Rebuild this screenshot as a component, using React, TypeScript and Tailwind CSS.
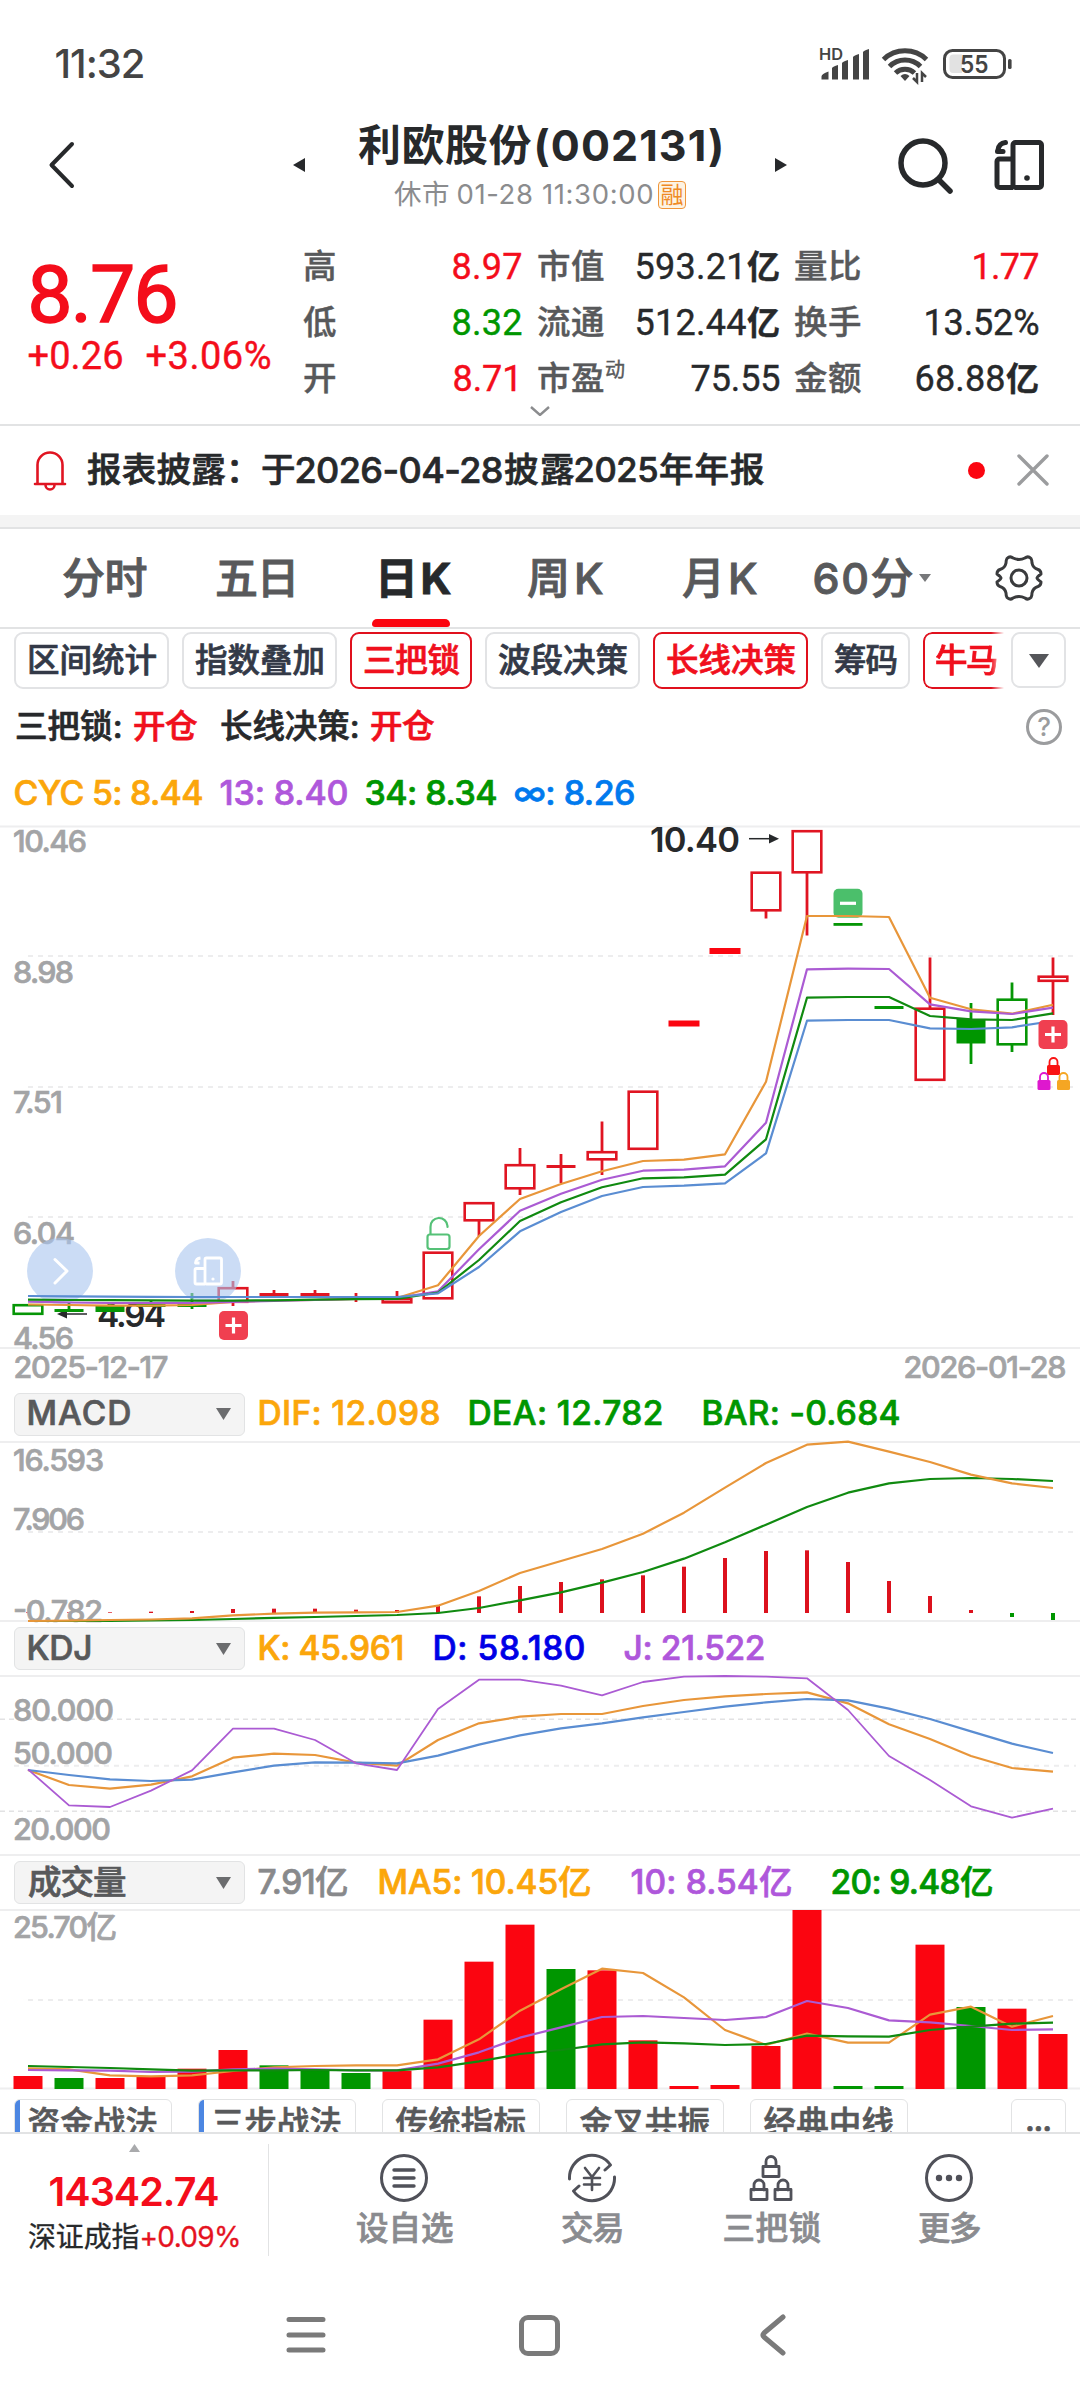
import { useLayoutEffect, useRef, useState, type ReactNode } from "react";

const FONT = "font-['Inter','Noto_Sans_CJK_SC',sans-serif]";
const QUOTE_FONT = "font-['Roboto','Noto_Sans_CJK_SC',sans-serif]";

/** Text tracked so that it fills a fixed column width. */
function Fit({ w, className = "", children }: { w: number; className?: string; children: string }) {
  const ref = useRef<HTMLSpanElement>(null);
  const [spacing, setSpacing] = useState(0);
  const cjk = children.charCodeAt(0) > 0x2e80;
  useLayoutEffect(() => {
    const el = ref.current;
    if (!el) return;
    const natural = el.getBoundingClientRect().width - spacing * children.length;
    setSpacing((w + (cjk ? 1.5 : 3) - natural) / Math.max(1, children.length - 1));
  }, [w, children]);
  return (
    <span className={`inline-block shrink-0 whitespace-pre leading-none ${className}`} style={{ width: w }}>
      <span ref={ref} className={cjk ? "inline-block" : "-ml-[1.5px] inline-block"} style={{ letterSpacing: spacing }}>
        {children}
      </span>
    </span>
  );
}

/* ------------------------------------------------------------------ icons */

function SplitScreenIcon({ className }: { className: string }) {
  return (
    <svg viewBox="0 0 52 52" className={className} fill="none" stroke="currentColor" strokeWidth="5" strokeLinejoin="round">
      <rect x="20" y="3.500" width="28.500" height="45" rx="2.500" />
      <path d="M20 20H6.500a2.500 2.500 0 0 0-2.500 2.500V46a2.500 2.500 0 0 0 2.500 2.500H20" />
      <path d="M12.500 3.500C8 4 5.500 7 5 11" strokeLinecap="round" />
      <path d="M4.500 12.500H10" strokeLinecap="round" />
      <circle cx="34" cy="39" r="2.800" fill="currentColor" stroke="none" />
    </svg>
  );
}

function StatusBar() {
  return (
    <div className="flex h-[120px] items-center pl-[56px] pr-[68px] pt-[7px] text-[#444]">
      <Fit w={88} className="text-[40px] font-medium">11:32</Fit>
      <svg viewBox="816 42 196 42" className="ml-auto h-[42px] w-[196px]" fill="#444">
        <text x="819" y="59" fontSize="15.500" fontWeight="600" fontFamily="Inter" textLength="24" lengthAdjust="spacingAndGlyphs">HD</text>
        <path d="M821.500 78.500v-3q0-2.500 7-5v8zM832 78.500V67q1-1.500 6-3v14.500zM842 78.500V62q1-1.500 6-3v19.500zM853 78.500V56q1-1.500 6-3v25.500zM863 78.500V51q1-1.500 6-3v30.500z" />
        <g fill="none" stroke="#444" strokeWidth="5">
          <path d="M883.500 58.500a31 31 0 0 1 43 0" />
          <path d="M889.500 65.500a22 22 0 0 1 31 0" />
          <path d="M895.500 72a14 14 0 0 1 19 0" />
        </g>
        <path d="M900.500 75q4.500-4 9 0l-4.500 5z" />
        <path d="M917 72v9l-4-4M922 81v-9l4 4" fill="none" stroke="#444" strokeWidth="2.500" />
        <rect x="944.500" y="49.500" width="60" height="27" rx="8" fill="none" stroke="#444" strokeWidth="3" />
        <path d="M953 53.500h9v18.500h-9q-3.500 0-3.500-4v-10.500q0-4 3.500-4z" fill="#e2e2e2" />
        <rect x="1008" y="58" width="3.600" height="10" rx="1.600" />
        <text x="960" y="72" fontSize="24.500" fontWeight="600" fontFamily="Inter" textLength="28.500" lengthAdjust="spacingAndGlyphs">55</text>
      </svg>
    </div>
  );
}

function Header() {
  return (
    <div className="flex h-[100px] text-[#27292b]">
      <div className="flex h-[90px] w-full items-center">
        <svg viewBox="0 0 28 50" className="ml-[48px] h-[50px] w-[28px]" fill="none" stroke="currentColor" strokeWidth="4" strokeLinecap="round" strokeLinejoin="round">
          <path d="M24 4 3.500 25 24 46" />
        </svg>
        <svg viewBox="0 0 12 14" className="ml-[217px] h-[14px] w-[12px]" fill="currentColor"><path d="M12 0v14L0 7z" /></svg>
        <div className="ml-[53px] flex w-[364px] flex-col items-center self-start">
          <div className="flex h-[50px] items-center">
            <Fit w={172} className="text-[43px] font-bold">利欧股份</Fit>
            <Fit w={187} className="ml-[5px] text-[43px] font-bold">(002131)</Fit>
          </div>
          <div className="flex h-[50px] items-center text-[27.500px] text-[#8b8c8e]">
            <Fit w={54}>休市</Fit>
            <Fit w={194} className="ml-[10px]">01-28 11:30:00</Fit>
            <span className="ml-[6px] flex h-[28px] w-[28px] items-center justify-center rounded-[4px] border-[1.500px] border-[#f0963a] bg-[#fdf3e3] text-[23px] leading-none text-[#ef8a25]">融</span>
          </div>
        </div>
        <svg viewBox="0 0 12 14" className="ml-[53px] h-[14px] w-[12px]" fill="currentColor"><path d="M0 0v14l12-7z" /></svg>
        <svg viewBox="0 0 56 56" className="ml-[110px] mt-[2px] h-[56px] w-[56px]" fill="none" stroke="currentColor" strokeWidth="5.500" strokeLinecap="round">
          <circle cx="26" cy="25" r="22" /><path d="m42 42 11 11" />
        </svg>
        <SplitScreenIcon className="ml-[40px] h-[52px] w-[52px]" />
      </div>
    </div>
  );
}

/* ------------------------------------------------------------------ quote */

type Cell = { label: string; value: string; w: number; color: string; unit?: string; sup?: string };
const RED = "text-[#f40d1b]";
const INK = "text-[#27292b]";
const QUOTE: { width: string; cells: Cell[] }[] = [
  {
    width: "w-[218px]",
    cells: [
      { label: "高", value: "8.97", w: 68, color: RED },
      { label: "低", value: "8.32", w: 68, color: "text-[#009600]" },
      { label: "开", value: "8.71", w: 67, color: RED },
    ],
  },
  {
    width: "ml-[16px] w-[242px]",
    cells: [
      { label: "市值", value: "593.21", w: 109, color: INK, unit: "亿" },
      { label: "流通", value: "512.44", w: 109, color: INK, unit: "亿" },
      { label: "市盈", value: "75.55", w: 87, color: INK, sup: "动" },
    ],
  },
  {
    width: "ml-[15px] w-[244px]",
    cells: [
      { label: "量比", value: "1.77", w: 65, color: RED },
      { label: "换手", value: "13.52%", w: 113, color: INK },
      { label: "金额", value: "68.88", w: 88, color: INK, unit: "亿" },
    ],
  },
];

function Quote() {
  return (
    <div className={`h-[204px] pt-[19px] [-webkit-text-stroke:0.4px] ${QUOTE_FONT}`}>
      <div className="flex h-[167px]">
        <div className={`w-[303px] pl-[29px] ${RED}`}>
          <div className="flex h-[96px] items-center pt-[16px]">
            <Fit w={148} className="text-[80px] [-webkit-text-stroke:1.6px]">8.76</Fit>
          </div>
          <div className="flex h-[42px] items-center">
            <Fit w={93} className="text-[38px]">+0.26</Fit>
            <Fit w={123} className="ml-[25px] text-[38px]">+3.06%</Fit>
          </div>
        </div>
        {QUOTE.map((col, i) => (
          <div key={i} className={col.width}>
            {col.cells.map((c) => (
              <div key={c.label} className="flex h-[56px] items-center">
                <Fit w={c.label.length * 33} className="text-[33.500px] font-medium text-[#58595b]">{c.label}</Fit>
                {c.sup && <span className="mb-[18px] ml-[2px] text-[20px] leading-none text-[#58595b]">{c.sup}</span>}
                <Fit w={c.w} className={`ml-auto text-[36px] ${c.color}`}>{c.value}</Fit>
                {c.unit && <Fit w={32} className="ml-[2px] text-[33px] font-bold text-[#27292b]">{c.unit}</Fit>}
              </div>
            ))}
          </div>
        ))}
      </div>
      <svg viewBox="0 0 20 10" className="mx-auto h-[10px] w-[20px]" fill="none" stroke="#8b8c8e" strokeWidth="2.400">
        <path d="m1 1 9 8 9-8" />
      </svg>
    </div>
  );
}

function Notice() {
  return (
    <div className="flex h-[91px] items-center border-t-2 border-[#e2e3e4] pb-[1px] pl-[33px] pr-[31px]">
      <svg viewBox="0 0 34 41" className="h-[41px] w-[34px]" fill="none" stroke="#e01522" strokeWidth="2.600" strokeLinecap="round" strokeLinejoin="round">
        <path d="M4.500 33V15a12.500 12.500 0 0 1 25 0v18M2 34h30M12.500 35a4.500 4.500 0 0 0 9 0" />
      </svg>
      <div className="ml-[20px] flex items-center text-[34.500px] font-medium text-[#27292b] [-webkit-text-stroke:0.7px]">
        <Fit w={172}>报表披露：</Fit>
        <Fit w={34} className="ml-[2px]">于</Fit>
        <Fit w={206} className="ml-[1px] text-[36px]">2026-04-28</Fit>
        <Fit w={69} className="ml-[2px]">披露</Fit>
        <Fit w={82} className="ml-[2px]">2025</Fit>
        <Fit w={104} className="ml-[2px]">年年报</Fit>
      </div>
      <span className="ml-auto h-[17px] w-[17px] rounded-full bg-[#fb0510]" />
      <svg viewBox="0 0 32 32" className="ml-[32px] h-[32px] w-[32px]" stroke="#9b9c9e" strokeWidth="3.400" strokeLinecap="round">
        <path d="m2 2 28 28M30 2 2 30" />
      </svg>
    </div>
  );
}

const TABS = [
  { t: "分时", w: 84, c: "ml-[62px] font-medium text-[#58595b]" },
  { t: "五日", w: 83, c: "ml-[69px] font-medium text-[#58595b]" },
  { t: "日K", w: 75, c: "ml-[77px] font-bold text-[#27292b]", on: true },
  { t: "周K", w: 75, c: "ml-[77px] font-medium text-[#58595b]" },
  { t: "月K", w: 74, c: "ml-[80px] font-medium text-[#58595b]" },
  { t: "60分", w: 98, c: "ml-[58px] font-medium text-[#58595b]" },
];

function Tabs() {
  return (
    <div className="flex h-[102px] items-center border-b-2 border-t-2 border-[#e2e3e4] [-webkit-text-stroke:0.9px]">
      {TABS.map((tab) => (
        <div key={tab.t} className={`relative flex h-full items-center pt-px ${tab.c}`}>
          <Fit w={tab.w} className="text-[43px]">{tab.t}</Fit>
          {tab.on && <span className="absolute -left-[3px] bottom-0 h-[8px] w-[78px] rounded-t-[5px] rounded-b-[3px] bg-[#fb0510]" />}
        </div>
      ))}
      <svg viewBox="0 0 12 8" className="ml-[7px] h-[8px] w-[12px]" fill="#77787a"><path d="M0 0h12L6 8z" /></svg>
      <svg viewBox="-24 -24 48 48" className="ml-[64px] h-[48px] w-[48px]" fill="none" stroke="#3a3b3d" strokeWidth="3" strokeLinejoin="round">
        <path d="M-12-19.500Q-9-22.500-6-20Q0-17 6-20Q9-22.500 12-19.500Q13-18 13-15Q14-10 19-8.500Q22-7.500 22-4Q18-1 18 0Q18 1 22 4Q22 7.500 19 8.500Q14 10 13 15Q13 18 12 19.500Q9 22.500 6 20Q0 17-6 20Q-9 22.500-12 19.500Q-13 18-13 15Q-14 10-19 8.500Q-22 7.500-22 4Q-18 1-18 0Q-18-1-22-4Q-22-7.500-19-8.500Q-14-10-13-15Q-13-18-12-19.500Z" />
        <circle r="8" />
      </svg>
    </div>
  );
}

const CHIP_OFF = "border-[#e2e3e5] text-[#333947]";
const CHIP_ON = "border-[#e0101d] text-[#f0101d]";
const CHIPS = [
  { t: "区间统计", on: false },
  { t: "指数叠加", on: false },
  { t: "三把锁", on: true },
  { t: "波段决策", on: false },
  { t: "长线决策", on: true },
  { t: "筹码", on: false },
];

function IndicatorChips() {
  return (
    <div className="flex h-[62px] items-start pl-[14px] pr-[14px] pt-[3px] [-webkit-text-stroke:0.7px]">
      <div className="flex w-[991px] gap-[13.500px] overflow-hidden">
        {CHIPS.map((c) => (
          <div key={c.t} className={`flex h-[57px] shrink-0 items-center rounded-[9px] border-2 px-[11px] pt-px text-[32.500px] font-medium ${c.on ? CHIP_ON : CHIP_OFF}`}>
            <Fit w={c.t.length * 33 - 3.5}>{c.t}</Fit>
          </div>
        ))}
        <div className={`flex h-[57px] w-[81px] shrink-0 items-center rounded-l-[9px] border-2 border-r-0 pl-[10px] pt-px text-[32.500px] font-medium [mask-image:linear-gradient(to_right,#000_84%,transparent)] ${CHIP_ON}`}>
          <Fit w={62}>牛马</Fit>
        </div>
      </div>
      <div className="ml-auto flex h-[56px] w-[55px] items-center justify-center rounded-[9px] border-2 border-[#e2e3e5]">
        <svg viewBox="0 0 20 15" className="h-[15px] w-[20px]" fill="#55565a"><path d="M0 1h20L10 15z" /></svg>
      </div>
    </div>
  );
}

function Signals() {
  return (
    <>
      <div className="flex h-[72px] items-center pl-[15px] pr-[18px] text-[32.500px] font-medium text-[#27292b] [-webkit-text-stroke:0.7px]">
        <Fit w={106}>三把锁:</Fit>
        <Fit w={63} className="ml-[12px] text-[#f0101d]">开仓</Fit>
        <Fit w={138} className="ml-[24px]">长线决策:</Fit>
        <Fit w={63} className="ml-[12px] text-[#f0101d]">开仓</Fit>
        <span className="ml-auto flex h-[36px] w-[36px] items-center justify-center rounded-full border-[3px] border-[#9b9c9e] text-[26px] leading-none text-[#9b9c9e] [-webkit-text-stroke:0]">?</span>
      </div>
      <div className="flex h-[59px] items-center pl-[15px] text-[34px] font-medium [-webkit-text-stroke:0.7px]">
        <Fit w={187} className="text-[#fba60b]">CYC 5: 8.44</Fit>
        <Fit w={126} className="ml-[19px] text-[#af57db]">13: 8.40</Fit>
        <Fit w={130} className="ml-[19px] text-[#009600]">34: 8.34</Fit>
        <Fit w={119} className="ml-[19px] text-[#007aee]">∞: 8.26</Fit>
      </div>
    </>
  );
}

/* ----------------------------------------------------------------- charts */

const STEP = 41;
const X0 = 28;
const xAt = (i: number) => X0 + i * STEP;
const R = "#e01522";
const G = "#069606";
const UP = "#fb0510";
const DOWN = "#009600";
const ORANGE = "#e8963a";
const PURPLE = "#ab5bd3";
const BLUE = "#5a8dd2";
const GREEN = "#108a10";

function Line({ ys, color, width = 2.2 }: { ys: number[]; color: string; width?: number }) {
  return (
    <polyline points={ys.map((y, i) => `${xAt(i).toFixed(1)},${y}`).join(" ")} fill="none" stroke={color} strokeWidth={width} strokeLinejoin="round" />
  );
}

function Axis({ y, w, children }: { y: number; w: number; children: string }) {
  return (
    <text x="13" y={y} textLength={w + 2} fontSize="30.500" fontWeight="500" fill="#a3a4a6" stroke="#a3a4a6" strokeWidth="0.700" className={FONT}>
      {children}
    </text>
  );
}

function Grid({ y, from = 28 }: { y: number; from?: number }) {
  return <path d={`M${from} ${y}H1076`} stroke="#ededee" strokeWidth="2" strokeDasharray="5 5" />;
}

type Candle = { i: number; c: string; top: number; bottom: number; high?: number; low?: number; solid?: boolean };
const CANDLES: Candle[] = [
  { i: 0, c: G, top: 1304, bottom: 1315 },
  { i: 1, c: G, top: 1309, bottom: 1312, high: 1303, solid: true },
  { i: 2, c: G, top: 1306, bottom: 1312, high: 1303, solid: true },
  { i: 3, c: G, top: 1304, bottom: 1307, high: 1300, solid: true },
  { i: 4, c: G, top: 1304, bottom: 1307, high: 1293, low: 1309, solid: true },
  { i: 5, c: R, top: 1287, bottom: 1303, high: 1281, low: 1306 },
  { i: 6, c: R, top: 1293, bottom: 1296, high: 1290, solid: true },
  { i: 7, c: R, top: 1293, bottom: 1296, high: 1290, solid: true },
  { i: 8, c: R, top: 1297, bottom: 1299, high: 1293, low: 1302, solid: true },
  { i: 9, c: R, top: 1298, bottom: 1303.5, high: 1291 },
  { i: 10, c: R, top: 1251.5, bottom: 1299.5 },
  { i: 11, c: R, top: 1202, bottom: 1221.5, low: 1236 },
  { i: 12, c: R, top: 1164, bottom: 1189.5, high: 1148, low: 1195 },
  { i: 13, c: R, top: 1165, bottom: 1168, high: 1154, low: 1183, solid: true },
  { i: 14, c: R, top: 1151, bottom: 1160.5, high: 1121.5, low: 1175 },
  { i: 15, c: R, top: 1090.5, bottom: 1150 },
  { i: 16, c: UP, top: 1020.5, bottom: 1026.5, solid: true },
  { i: 17, c: UP, top: 948, bottom: 954, solid: true },
  { i: 18, c: R, top: 871.5, bottom: 911.5, low: 918.5 },
  { i: 19, c: R, top: 830, bottom: 873.5, low: 935.5 },
  { i: 20, c: G, top: 923, bottom: 925.8, solid: true },
  { i: 21, c: G, top: 1006, bottom: 1009, solid: true },
  { i: 22, c: R, top: 1007.5, bottom: 1081, high: 957.5 },
  { i: 23, c: DOWN, top: 1019, bottom: 1043.5, high: 1003, low: 1064, solid: true },
  { i: 24, c: G, top: 998.5, bottom: 1045.5, high: 982.5, low: 1052 },
  { i: 25, c: R, top: 975.5, bottom: 982, high: 957.5, low: 1015 },
];

const MAIN = {
  c5: [1304.5, 1305, 1305.7, 1305.7, 1305, 1302, 1300.5, 1300, 1299, 1298, 1285.3, 1236, 1199, 1184, 1171.3, 1161, 1159.7, 1154.3, 1081.7, 916, 916, 917, 997.7, 1009.3, 1013.7, 1004.7],
  c13: [1301.7, 1302.5, 1303, 1303, 1303, 1302, 1301, 1300, 1299, 1298, 1291.3, 1249.3, 1210.7, 1193.7, 1179.7, 1170.7, 1169.7, 1166.3, 1122.7, 969.3, 968.7, 969, 1004.3, 1011.3, 1014, 1007.7],
  c34: [1299.7, 1300, 1300.2, 1300.4, 1300.6, 1300.6, 1300.3, 1299.6, 1299.2, 1299, 1292.5, 1260, 1221, 1202.3, 1187.3, 1178.3, 1177.3, 1174.7, 1139.3, 997.7, 997, 997, 1016, 1019.3, 1020, 1013.3],
  inf: [1296, 1296.3, 1296.6, 1296.8, 1297, 1297, 1297, 1297, 1297, 1297, 1293.3, 1267, 1231.3, 1212, 1196, 1187, 1185.7, 1183.3, 1153.3, 1020.7, 1020, 1020, 1028.3, 1029, 1027.3, 1021],
};

function Badge({ x, y, color, plus }: { x: number; y: number; color: string; plus?: boolean }) {
  return (
    <g>
      <rect x={x - 14.5} y={y - 14.5} width="29" height="29" rx="5" fill={color} />
      <path d={plus ? `M${x - 8} ${y}h16M${x} ${y - 8}v16` : `M${x - 8} ${y}h16`} stroke="#fff" strokeWidth="3.200" />
    </g>
  );
}

function Lock({ x, y, color }: { x: number; y: number; color: string }) {
  return (
    <g>
      <path d={`M${x - 4} ${y + 9}V${y + 5}a4 4 0 0 1 8 0v4`} fill="none" stroke={color} strokeWidth="1.800" />
      <rect x={x - 6.5} y={y + 8} width="13" height="10" rx="1.500" fill={color} />
    </g>
  );
}

function MainChart() {
  return (
    <svg viewBox="0 822 1080 528" className="block h-[528px] w-full">
      <path d="M0 826.500H1080" stroke="#eeeeef" strokeWidth="2" />
      <path d="M0 1348H1080" stroke="#eeeeef" strokeWidth="2" />
      {[956, 1087, 1217].map((y) => <Grid key={y} y={y} />)}
      <Axis y={852} w={72}>10.46</Axis>
      <Axis y={983} w={59}>8.98</Axis>
      <Axis y={1113} w={48}>7.51</Axis>
      <Axis y={1244} w={60}>6.04</Axis>
      <Axis y={1349} w={59}>4.56</Axis>
      <text x="650" y="852" textLength="90" fontSize="34.500" fontWeight="600" fill="#27292b" className={FONT}>10.40</text>
      <path d="M749 838.700h20" stroke="#27292b" strokeWidth="1.500" />
      <path d="M769 834l10 4.700-10 4.700z" fill="#27292b" />
      <text x="97" y="1327" textLength="69" fontSize="33.500" fontWeight="600" fill="#27292b" className={FONT}>4.94</text>
      <path d="M67 1314h20" stroke="#27292b" strokeWidth="1.500" />
      <path d="M67 1309.500l-10 4.500 10 4.500z" fill="#27292b" />
      {CANDLES.map((k) => {
        const x = xAt(k.i);
        return (
          <g key={k.i} stroke={k.c}>
            {k.high !== undefined && <path d={`M${x} ${k.high}V${k.top + 1}`} strokeWidth="2.800" />}
            {k.low !== undefined && <path d={`M${x} ${k.bottom - 1}V${k.low}`} strokeWidth="2.800" />}
            {k.solid ? (
              <rect x={x - 14.5 - (k.c === UP ? 1 : 0)} y={k.top} width={k.c === UP ? 31 : 29} height={k.bottom - k.top} fill={k.c} stroke="none" />
            ) : (
              <rect x={x - 14.3} y={k.top + 1.2} width="28.600" height={k.bottom - k.top - 2.4} fill="#fff" strokeWidth="2.600" />
            )}
          </g>
        );
      })}
      <g fill="none" stroke="#55c177" strokeWidth="2.200">
        <rect x="427.500" y="1234.500" width="22" height="14.500" rx="2.500" />
        <path d="M430.500 1234v-7a8.500 8.500 0 0 1 17-1v1" strokeLinecap="round" />
      </g>
      <circle cx="60" cy="1271" r="33" fill="#a9c5ef" fillOpacity="0.600" />
      <circle cx="208" cy="1271" r="33" fill="#a9c5ef" fillOpacity="0.600" />
      <path d="M55 1259.500l12 11.500-12 12" fill="none" stroke="#fff" strokeWidth="3" strokeLinecap="round" strokeLinejoin="round" />
      <g fill="none" stroke="#fff" strokeWidth="2.800" strokeLinejoin="round">
        <rect x="205" y="1258" width="16.500" height="26" rx="1.500" />
        <path d="M205 1268.500h-8.500q-1.500 0-1.500 1.500v12.500q0 1.500 1.500 1.500h8.500M200.500 1258q-4.500.5-5 5h4" />
        <circle cx="213" cy="1279" r="1.600" fill="#fff" stroke="none" />
      </g>
      <Badge x={xAt(20)} y={903.300} color="#4bbf6b" />
      <Line ys={MAIN.c5} color={ORANGE} />
      <Line ys={MAIN.c13} color={PURPLE} />
      <Line ys={MAIN.c34} color={GREEN} />
      <Line ys={MAIN.inf} color={BLUE} />
      <Badge x={xAt(5) + 0.5} y={1325.500} color="#f03f50" plus />
      <Badge x={xAt(25)} y={1034.500} color="#f03f50" plus />
      <Lock x={1053.500} y={1057} color="#f91414" />
      <Lock x={1044} y={1072} color="#de18ce" />
      <Lock x={1063.500} y={1072} color="#f5a623" />
    </svg>
  );
}

type Reading = { t: string; w: number; c: string };
function PanelHeader({ name, nameW, readings, className }: { name: string; nameW: number; readings: Reading[]; className: string }) {
  return (
    <div className={`flex items-center pl-[14px] text-[33.500px] font-medium [-webkit-text-stroke:0.7px] ${className}`}>
      <div className="flex h-[43px] w-[231px] items-center justify-between rounded-[6px] border-[1.500px] border-[#e2e3e4] bg-[#f4f4f4] pl-[13px] pr-[13px] text-[#58595b]">
        <Fit w={nameW}>{name}</Fit>
        <svg viewBox="0 0 15 12" className="h-[12px] w-[15px]" fill="#6b6c6e"><path d="M0 0h15L7.500 12z" /></svg>
      </div>
      {readings.map((r) => (
        <Fit key={r.t} w={r.w} className={r.c}>{r.t}</Fit>
      ))}
    </div>
  );
}

const scale = (origin: number, vs: number[]) => vs.map((v) => origin + v / 3);
const DIF = [1621, 1620.7, 1620, 1619.5, ...scale(1380, [715, 706, 701, 698, 697, 696, 677, 633, 579, 543, 507, 461, 398, 323, 249, 194, 185, 215, 246, 284, 310, 324])];
const DEA = [1621, 1621, 1621, 1620.5, ...scale(1380, [720, 717, 713.5, 711, 708, 705, 699, 684, 661, 637, 608, 576, 536, 487, 434, 381, 338, 310, 297, 294, 297, 303])];
const MACD_TOP = scale(1380, [697, 697, 697, 695, 693, 687, 686, 686, 689, 690, 678, 649, 618, 606, 598, 586, 560, 534, 513, 511, 546, 603, 648, 690]);

function MacdChart() {
  return (
    <svg viewBox="0 1440 1080 183" className="block h-[183px] w-full">
      <path d="M0 1442H1080M0 1621H1080" stroke="#eeeeef" strokeWidth="2" />
      <Grid y={1532} />
      {MACD_TOP.map((y, i) => <rect key={i} x={xAt(i) - 2} y={y} width="4" height={1613 - y} fill="#dc111d" />)}
      <rect x={xAt(24) - 2} y="1613" width="4" height="4" fill={DOWN} />
      <rect x={xAt(25) - 2} y="1613" width="4" height="7" fill={DOWN} />
      <Axis y={1470.500} w={89}>16.593</Axis>
      <Axis y={1529.500} w={70}>7.906</Axis>
      <Axis y={1621.500} w={88}>-0.782</Axis>
      <Line ys={DEA} color={GREEN} />
      <Line ys={DIF} color={ORANGE} />
    </svg>
  );
}

const K = scale(1620, [450, 495, 506, 494, 469, 413, 401, 405, 428, 437, 360, 310, 290, 282, 282, 258, 240, 229, 222, 217, 250, 313, 357, 408, 444, 455]);
const D = scale(1620, [450, 465, 478, 483, 479, 457, 437, 427, 428, 430, 407, 374, 346, 325, 310, 292, 276, 260, 247, 237, 241, 266, 297, 334, 371, 399]);
const J = scale(1620, [448, 556, 561, 512, 451, 326, 326, 360, 430, 450, 267, 179, 179, 197, 226, 186, 170, 168, 170, 175, 270, 408, 480, 559, 593, 566]);

function KdjChart() {
  return (
    <svg viewBox="0 1674 1080 183" className="block h-[183px] w-full">
      <path d="M0 1676H1080M0 1855H1080" stroke="#eeeeef" strokeWidth="2" />
      <g stroke="#e2e2e3" strokeWidth="1.500" strokeDasharray="5 4">
        <path d="M0 1719.300H1076M0 1811.300H1076" />
      </g>
      <Grid y={1765.700} from={14} />
      <Axis y={1720.500} w={99}>80.000</Axis>
      <Axis y={1763.500} w={98}>50.000</Axis>
      <Axis y={1839.500} w={96}>20.000</Axis>
      <Line ys={K} color={ORANGE} />
      <Line ys={D} color={BLUE} />
      <Line ys={J} color={PURPLE} width={1.8} />
    </svg>
  );
}

const VOL = scale(1850, [678, 684, 684, 678, 656, 600, 646, 661, 669, 662, 509, 335, 224, 357, 361, 571, 708, 705, 588, 180, 708, 708, 284, 471, 476, 552]);
const VOL_DOWN = new Set([1, 6, 7, 8, 13, 20, 21, 23]);
const MA5 = scale(1850, [655, 658, 676, 679, 676, 663, 652, 648, 646, 646, 628, 568, 482, 418, 356, 369, 442, 540, 585, 551, 578, 578, 494, 470, 530, 498]);
const MA10 = scale(1850, [660, 661, 662, 666, 665, 658, 656, 658, 661, 661, 641, 607, 563, 532, 501, 498, 504, 510, 501, 453, 474, 511, 517, 528, 540, 538]);
const MA20 = scale(1850, [648, 651, 654, 658, 662, 661, 661, 660, 661, 661, 652, 634, 612, 600, 583, 577, 580, 585, 582, 557, 559, 560, 540, 530, 521, 518]);

function VolumeChart() {
  return (
    <svg viewBox="0 1908 1080 183" className="block h-[183px] w-full">
      <path d="M0 1910H1080M0 2088.500H1080" stroke="#eeeeef" strokeWidth="2" />
      <Grid y={2000} />
      {VOL.map((y, i) => (
        <rect key={i} x={xAt(i) - 14.5} y={y} width="29" height={2089 - y} fill={VOL_DOWN.has(i) ? DOWN : UP} />
      ))}
      <Axis y={1938} w={102}>25.70亿</Axis>
      <Line ys={MA5} color={ORANGE} />
      <Line ys={MA10} color={PURPLE} />
      <Line ys={MA20} color={GREEN} />
    </svg>
  );
}

/* ----------------------------------------------------------------- bottom */

const STRATEGIES = [
  { t: "资金战法", mark: true },
  { t: "三步战法", mark: true },
  { t: "传统指标", mark: false },
  { t: "金叉共振", mark: false },
  { t: "经典中线", mark: false },
];

function Strategies() {
  return (
    <div className="flex h-[41px] items-start gap-[26.500px] overflow-hidden pl-[14px] pr-[14px] pt-[8px] text-[32.500px] font-medium text-[#58595b] [-webkit-text-stroke:0.7px]">
      {STRATEGIES.map((s) => (
        <div key={s.t} className="relative flex h-[54px] w-[157.500px] shrink-0 items-center overflow-hidden rounded-[6px] border-[1.500px] border-[#e2e3e4] pl-[12.500px] pb-[4px]">
          {s.mark && <span className="absolute -left-px -top-px h-[56px] w-[6px] bg-[#4c86e2]" />}
          <Fit w={129}>{s.t}</Fit>
        </div>
      ))}
      <div className="ml-auto flex h-[54px] w-[55px] shrink-0 items-center justify-center rounded-[6px] border-[1.500px] border-[#e2e3e4] pb-[12px]">
        <Fit w={24}>...</Fit>
      </div>
    </div>
  );
}

function Action({ label, w, className, children }: { label: string; w: number; className: string; children: ReactNode }) {
  return (
    <div className={`flex w-[110px] shrink-0 flex-col items-center ${className}`}>
      <svg viewBox="-25 -25 50 50" className="h-[50px] w-[50px]" fill="none" stroke="#505159" strokeWidth="3" strokeLinecap="round" strokeLinejoin="round">
        {children}
      </svg>
      <div className="flex h-[50px] items-center pt-[3px] text-[32.500px] font-medium text-[#8a8b8f] [-webkit-text-stroke:0.7px]">
        <Fit w={w}>{label}</Fit>
      </div>
    </div>
  );
}

function ActionBar() {
  return (
    <div className="flex h-[138px] border-t-2 border-[#e2e3e4]">
      <div className="mt-[10px] flex h-[112px] w-[269px] flex-col items-center border-r-[1.500px] border-[#e2e3e4]">
        <svg viewBox="0 0 11 8" className="h-[8px] w-[11px]" fill="#a9aaac"><path d="M0 8h11L5.500 0z" /></svg>
        <div className="mt-[17px] flex h-[48px] items-center">
          <Fit w={168} className="text-[39.500px] font-semibold text-[#f40d1b]">14342.74</Fit>
        </div>
        <div className="mt-[5px] flex h-[30px] items-center text-[28px] [-webkit-text-stroke:0.3px]">
          <Fit w={110} className="text-[#27292b]">深证成指</Fit>
          <Fit w={99} className="ml-[3px] text-[#e5131f]">+0.09%</Fit>
        </div>
      </div>
      <div className="flex pt-[19px]">
        <Action label="设自选" w={96} className="ml-[80px]">
          <circle r="22.500" />
          <path d="M-10-8h20M-10 0h20M-10 8h20" strokeWidth="3.400" />
        </Action>
        <Action label="交易" w={62} className="ml-[78px]">
          <path d="M-22.500 1A22.500 22.500 0 0 1 18.500-13l-5.500 5M22.500-1A22.500 22.500 0 0 1-18.500 13l5.500-5" />
          <path d="m-7-10 7 9 7-9M-8 0H8M-8 6.500H8M0-1v13" strokeWidth="2.600" />
        </Action>
        <Action label="三把锁" w={97} className="ml-[69px]">
          <path d="M-5-11.500v-5a5 5 0 0 1 10 0v5M-17 12V7a5 5 0 0 1 10 0v5M7 12V7a5 5 0 0 1 10 0v5" strokeWidth="2.800" />
          <path d="M-8-11.500H8V-1.500H-8zM-20 11.500h16v10h-16zM4 11.500h16v10H4z" strokeWidth="2.800" />
        </Action>
        <Action label="更多" w={62} className="ml-[68px]">
          <circle r="22.500" />
          <g fill="#505159" stroke="none"><circle cx="-10" r="3.200" /><circle r="3.200" /><circle cx="10" r="3.200" /></g>
        </Action>
      </div>
    </div>
  );
}

function SystemNav() {
  return (
    <div className="flex h-[130px] items-center pl-[285px]">
      <svg viewBox="0 0 42 42" className="h-[42px] w-[42px]" stroke="#7a7a7a" strokeWidth="5" strokeLinecap="round"><path d="M4 5.500h34M4 21h34M4 36h34" /></svg>
      <span className="ml-[192px] h-[41px] w-[41px] rounded-[9px] border-[5px] border-[#7a7a7a]" />
      <svg viewBox="0 0 30 44" className="ml-[198px] h-[44px] w-[30px]" fill="none" stroke="#7a7a7a" strokeWidth="5" strokeLinecap="round" strokeLinejoin="round"><path d="M25 4 6 20q-2 2 0 4l19 16" /></svg>
    </div>
  );
}

export default function App() {
  return (
    <div className={`flex h-[2400px] w-[1080px] flex-col overflow-hidden bg-white ${FONT}`}>
      <StatusBar />
      <Header />
      <Quote />
      <Notice />
      <div className="h-[12px] bg-[#f4f4f4]" />
      <Tabs />
      <IndicatorChips />
      <Signals />
      <MainChart />
      <div className="flex h-[34px] items-center justify-between pl-[15px] pr-[15px] text-[30.500px] font-medium text-[#a3a4a6] [-webkit-text-stroke:0.7px]">
        <Fit w={152}>2025-12-17</Fit>
        <Fit w={160}>2026-01-28</Fit>
      </div>
      <PanelHeader
        name="MACD" nameW={102} className="h-[56px] pt-[4px]"
        readings={[
          { t: "DIF: 12.098", w: 180, c: "ml-[14px] text-[#fba60b]" },
          { t: "DEA: 12.782", w: 193, c: "ml-[30px] text-[#009600]" },
          { t: "BAR: -0.684", w: 196, c: "ml-[41px] text-[#009600]" },
        ]}
      />
      <MacdChart />
      <PanelHeader
        name="KDJ" nameW={63} className="h-[51px]"
        readings={[
          { t: "K: 45.961", w: 144, c: "ml-[14px] text-[#fba60b]" },
          { t: "D: 58.180", w: 150, c: "ml-[31px] text-[#0000e6]" },
          { t: "J: 21.522", w: 139, c: "ml-[41px] text-[#af57db]" },
        ]}
      />
      <KdjChart />
      <PanelHeader
        name="成交量" nameW={97} className="h-[51px]"
        readings={[
          { t: "7.91亿", w: 88, c: "ml-[14px] text-[#88898b]" },
          { t: "MA5: 10.45亿", w: 211, c: "ml-[32px] text-[#fba60b]" },
          { t: "10: 8.54亿", w: 159, c: "ml-[42px] text-[#af57db]" },
          { t: "20: 9.48亿", w: 160, c: "ml-[41px] text-[#009600]" },
        ]}
      />
      <VolumeChart />
      <Strategies />
      <ActionBar />
      <SystemNav />
    </div>
  );
}
